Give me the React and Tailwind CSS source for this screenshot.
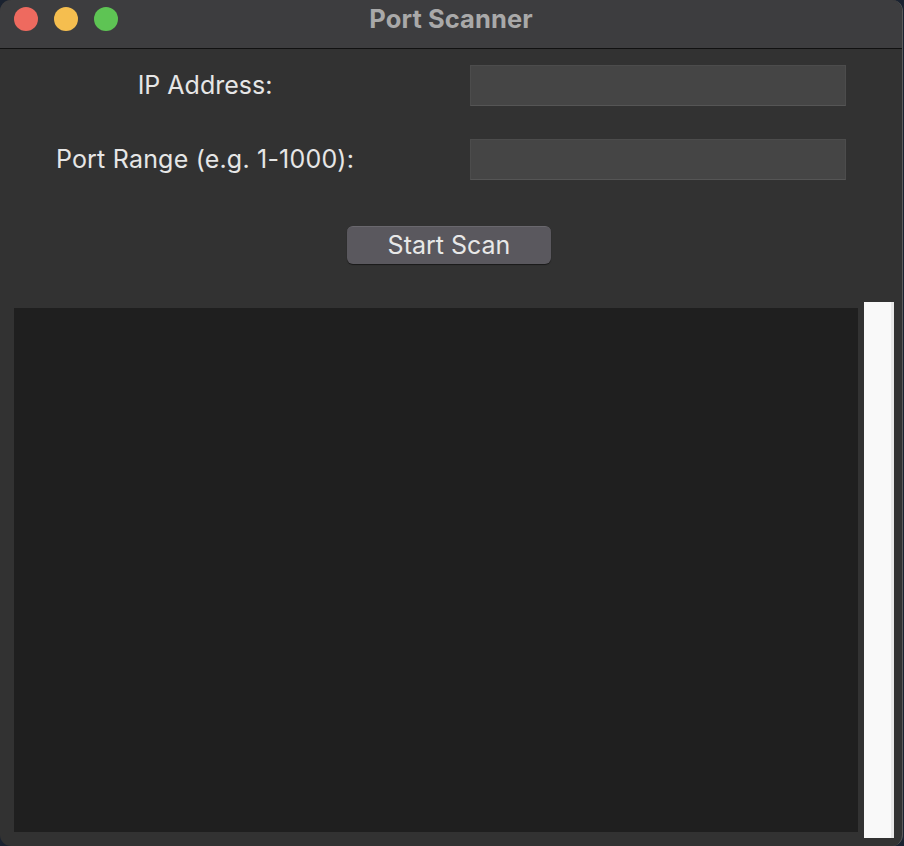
export default function App() {
  return (
    <div className="w-[904px] h-[846px] bg-[#1a2230] overflow-hidden" style={{ fontFamily: "Inter, 'Liberation Sans', sans-serif" }}>
      <div className="w-[903px] h-[846px] rounded-[11px] overflow-hidden bg-[#323232] flex flex-col border-r border-[#5a5a5a]">
        <div className="h-[49px] shrink-0 bg-[#3d3d3f] border-b border-[#111] relative flex items-center justify-center">
          <div className="absolute left-[14px] top-[7px] flex gap-[16px]">
            <div className="w-[24px] h-[24px] rounded-full bg-[#ee6a5f]" />
            <div className="w-[24px] h-[24px] rounded-full bg-[#f5be4f]" />
            <div className="w-[24px] h-[24px] rounded-full bg-[#5ec454]" />
          </div>
          <div className="text-[25.5px] font-bold text-[#a9a9a9] -mt-[11px] tracking-[0.1px] leading-none">Port Scanner</div>
        </div>
        <div className="flex flex-col">
          <div className="flex items-center mt-[16px] h-[41px]">
            <div className="w-[410px] text-center text-[25px] text-[#e6e6e6] leading-none">IP Address:</div>
            <div className="ml-[60px] w-[376px] h-[41px] bg-[#454545] border border-[#4c4c4c] border-b-[#555]" />
          </div>
          <div className="flex items-center mt-[33px] h-[41px]">
            <div className="w-[410px] text-center text-[25px] text-[#e6e6e6] leading-none tracking-[0.2px]">Port Range (e.g. 1-1000):</div>
            <div className="ml-[60px] w-[376px] h-[41px] bg-[#454545] border border-[#4c4c4c] border-b-[#555]" />
          </div>
          <div className="flex justify-center mt-[46px]">
            <div className="ml-[-4px] w-[204px] h-[38px] rounded-[6px] bg-[#5a585e] border-t border-[#6a686e] shadow-[0_1px_1px_rgba(0,0,0,0.5)] flex items-center justify-center text-[25px] text-[#e8e8e8] leading-none">Start Scan</div>
          </div>
          <div className="flex mt-[38px]">
            <div className="ml-[14px] mt-[6px] w-[844px] h-[524px] bg-[#1f1f1f]" />
            <div className="ml-[6px] w-[30px] h-[536px] bg-[#f9f9f9] border-r-[3px] border-[#e8e8e8]" />
          </div>
        </div>
      </div>
    </div>
  );
}
